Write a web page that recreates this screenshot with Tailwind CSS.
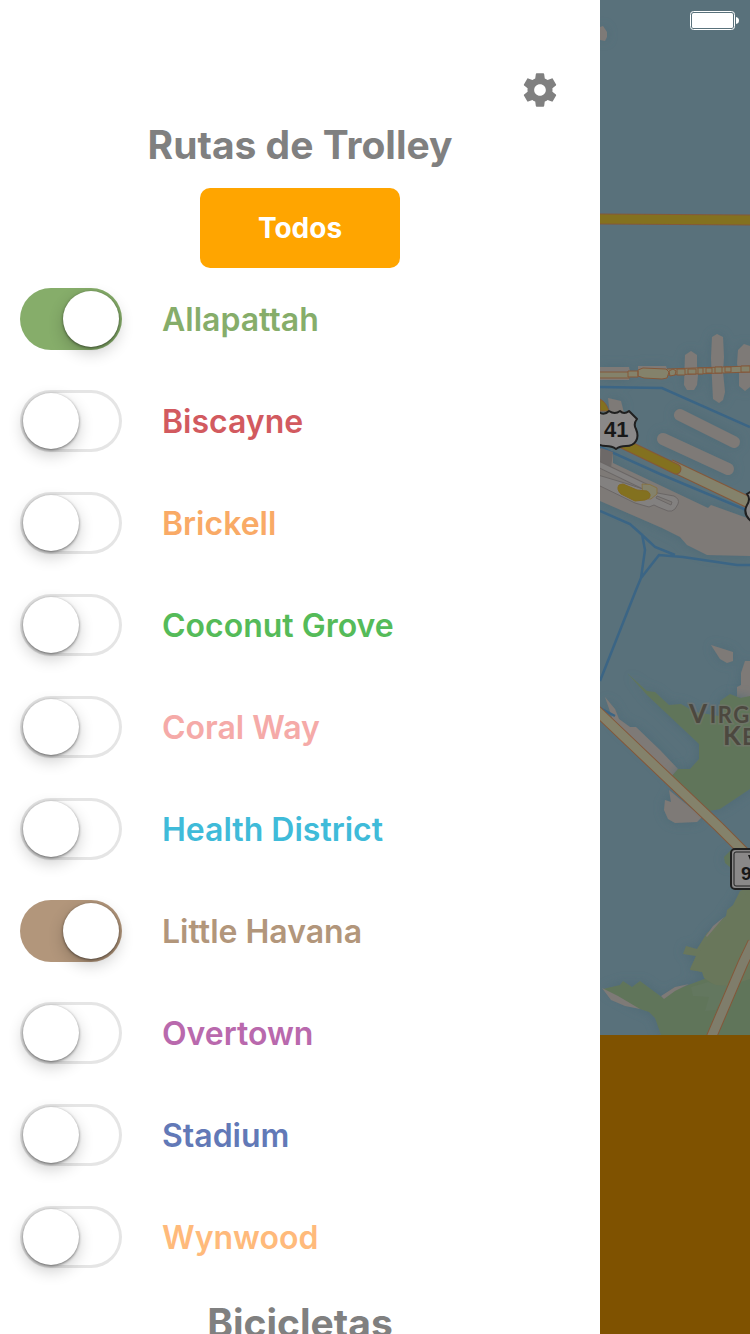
<!DOCTYPE html>
<html lang="es">
<head>
<meta charset="utf-8">
<meta name="viewport" content="width=device-width, initial-scale=1">
<title>Rutas de Trolley</title>
<script src="https://cdn.jsdelivr.net/npm/@tailwindcss/browser@4"></script>
</head>
<body class="bg-white font-['Inter','Liberation_Sans',sans-serif]">
<div class="flex h-screen overflow-hidden">
  <aside class="flex w-4/5 flex-col overflow-hidden bg-white pt-[70px]">
    <button type="button" aria-label="Ajustes" class="mr-10 h-10 w-10 shrink-0 self-end text-[#808080]">
      <svg viewBox="0 0 24 24" class="h-10 w-10" fill="currentColor" aria-hidden="true"><path d="M19.43 12.98c.04-.32.07-.64.07-.98s-.03-.66-.07-.98l2.11-1.65c.19-.15.24-.42.12-.64l-2-3.46c-.12-.22-.39-.3-.61-.22l-2.49 1c-.52-.4-1.08-.73-1.69-.98l-.38-2.65C14.46 2.18 14.25 2 14 2h-4c-.25 0-.46.18-.49.42l-.38 2.65c-.61.25-1.17.59-1.69.98l-2.49-1c-.23-.09-.49 0-.61.22l-2 3.46c-.13.22-.07.49.12.64l2.11 1.65c-.04.32-.07.65-.07.98s.03.66.07.98l-2.11 1.65c-.19.15-.24.42-.12.64l2 3.46c.12.22.39.3.61.22l2.49-1c.52.4 1.08.73 1.69.98l.38 2.65c.03.24.24.42.49.42h4c.25 0 .46-.18.49-.42l.38-2.65c.61-.25 1.17-.59 1.69-.98l2.49 1c.23.09.49 0 .61-.22l2-3.46c.12-.22.07-.49-.12-.64l-2.11-1.65zM12 15.5c-1.93 0-3.5-1.57-3.5-3.5s1.57-3.5 3.5-3.5 3.5 1.57 3.5 3.5-1.57 3.5-3.5 3.5z"/></svg>
    </button>
    <h1 class="mt-[10px] shrink-0 text-center text-[39px]/[50px] font-bold text-[#808080]">Rutas de Trolley</h1>
    <button type="button" class="mt-[18px] h-20 w-[200px] shrink-0 self-center rounded-[10px] bg-[#ffa500] text-[28px]/[40px] font-bold text-white">Todos</button>
    <ul id="routes" class="mt-5 flex shrink-0 flex-col gap-10 px-5"></ul>
    <h2 class="mt-[30px] shrink-0 text-center text-[39px]/[50px] font-bold text-[#808080]">Bicicletas</h2>
  </aside>

  <main class="relative flex w-1/5 flex-col overflow-hidden bg-[#59717b]">
    <svg viewBox="0 0 150 1035" preserveAspectRatio="xMinYMin slice" class="min-h-0 w-full flex-1" role="img" aria-label="Mapa de Miami">
      <defs>
        <filter id="shade" x="-30%" y="-30%" width="160%" height="160%"><feDropShadow dx="0" dy="0" stdDeviation="6" flood-color="#486873" flood-opacity=".75"/></filter>
      </defs>
      <rect width="150" height="1035" fill="#59717b"/>
      <!-- land -->
      <g fill="#7e7a77" filter="url(#shade)">
        <path d="M0 27 3 26 7 32 7 37 5 41 0 40z"/>
        <path d="M0 367h29l1 5-1 8H0zM38 366h28l2 6H38zM85 355l6-4 6 4v11l1 9-1 10-3 5h-7l-3-5zM112 337l5-3 6 3 1 20-1 15 2 20-2 8-4 3-6-4-1-20-1-21zM138 350l6-6 6 2v41l-5 4-6-5v-15l-2-7z"/>
        <path d="M8 398l13 3 3 12-14 2z"/>
        <path d="M80 415l54 27M63 439l65 30" stroke="#7e7a77" stroke-width="12" stroke-linecap="round"/>
        <path d="M0 447l13 4v12l95 45 3-3 39 14v37l-43-1-20-10-7-8-18-9L0 501z"/>
        <path d="M111 645l22 7v9l-6 2-7-4zM150 661h-5l-4 12v12l-4 2v10l5 1 5 9h3z"/>
        <path d="M5 697l10 12 4 10 11 8h6l24 23 18 19-7 8-57-54zM69 790l2 12-6-2-1 10 4 9 7 4 22-1 5-5z"/>
      </g>
      <!-- parks -->
      <g fill="#61755a" filter="url(#shade)">
        <path d="M27 673l20 18 8 1 14 13 12-1 14 8 24 4 1-15 10-7 10 4 10-2v93l-30 20-10 2-38-35 6-7h12l9-10v-15L47 695z"/>
        <path d="M131 850l-7 7 1 6 6 5z"/>
        <path fill="#69775b" d="M150 887l-10 4-7 14-6 5-1 6-19 17-10 16-11-3-3 8 13 2-6 14 13 2 2 6 47 15z"/>
        <path d="M3 989l17-4 3-4 9 6 8-6 23 17 12-8 32-12 43-10v67H61l-6-17-6-6-12-4z"/>
      </g>
      <path fill="#69775b" d="M150 889v90l-30 10-16-11-2-6-12-3 6-13z"/>
      <path fill="#63775f" d="M91 987l17-5 8 3 14 1-14 24-11 1 4-14-16-1z"/>
      <path fill="#7e7a77" d="M2 988l16 8 22 13-15-3-14-6zM61 996l14-9 14-3-14 7-11 8zM106 936l7-10 11-9-17 20z"/>
      <!-- ferry and shipping lanes -->
      <g fill="none" stroke="#3b6585" stroke-width="2.5">
        <path d="M0 387l62 1 88 39M0 447l60 27 86 36"/>
        <path d="M0 511l30 13 10 9 15 14 20 8M42 534l3 16-4 28-5 12L0 681M41 578l18-23 24 2 54 8h13M0 708l15 8"/>
      </g>
      <!-- port terminals -->
      <path fill="#6d6968" d="M1 448l12 4-2 16-11-5z"/>
      <path d="M-2 475l30 9 24 8 22 4q6 3 4 8l-3 5q-3 3-7 2l-10-4-4-2-5 2-14-4-37-18z" fill="#838180" stroke="#6b6766"/>
      <path d="M-2 464l54 26" stroke="#6b6766" stroke-width="7"/>
      <path d="M-2 464l54 26" stroke="#838180" stroke-width="5"/>
      <path d="M57 496l15 6-1 3-15-7z" fill="#7e7a77" stroke="#6b6766"/>
      <path d="M42 484q8-1 15 4v6l-6 5H43z" fill="#84826b" stroke="#876b35" stroke-width=".7"/>
      <path fill="#83711f" stroke="#846b20" d="M19 485l4-1 14 6 10 1q5 3 2 7l-4 2-10 1-14-7q-5-5-2-9z"/>
      <!-- roads -->
      <g fill="none">
        <path d="M-1 219l152 1" stroke="#84583a" stroke-width="11"/>
        <path d="M-1 219l152 1" stroke="#83711f" stroke-width="9"/>
        <path d="M0 375h30M67 372l83-3" stroke="#84583a" stroke-width="7"/>
        <path d="M0 375h30M67 372l83-3" stroke="#84826b" stroke-width="5"/>
        <path d="M28 371h10v6H28zM38 370l5-2 23 1 3 3-2 6-5 1-18-1-6-2zM69 371l4-2 3 2-1 4-5 1zM77 369h8v6h-8zM88 369h8v5h-8zM98 368h5v6h-5zM106 368h6v5h-6zM115 367h7v6h-7zM125 367h6v5h-6zM141 366h9v6h-9z" fill="#84826b" stroke="#84583a" stroke-width="1"/>
        <path d="M70 465l78 37" stroke="#84583a" stroke-width="12"/>
        <path d="M70 465l78 37" stroke="#84826b" stroke-width="10"/>
        <path d="M20 442l56 27" stroke="#84583a" stroke-width="11" stroke-linecap="round"/>
        <path d="M20 442l56 27" stroke="#83711f" stroke-width="9" stroke-linecap="round"/>
        <path d="M-5 709l124 118 35 35" stroke="#84583a" stroke-width="11"/>
        <path d="M-5 709l124 118 35 35" stroke="#84826b" stroke-width="9"/>
        <path d="M111 1038l32-75 10-21" stroke="#84583a" stroke-width="11"/>
        <path d="M111 1038l32-75 10-21" stroke="#7f7d6b" stroke-width="9"/>
      </g>
      <path d="M0 399q6 3 9 12H0z" fill="#83711f" stroke="#84583a"/>
      <!-- route shields -->
      <path d="M-1 412q5 4 10-1 6 4 11 0 4 4 9 0l8 8q-4 5-1 10 3 7 0 12-3 5-10 5-6 0-10 3-4-3-10-3-5 0-8-2z" fill="#8a8888" stroke="#202020" stroke-width="2" stroke-linejoin="round"/>
      <text x="4" y="437" font-family="Liberation Sans, sans-serif" font-size="22" font-weight="700" fill="#181818">41</text>
      <path d="M152 491l-5 3q4 5 0 11-5 9 5 17z" fill="#8a8888" stroke="#202020" stroke-width="2"/>
      <rect x="131" y="849" width="50" height="40" rx="4" fill="#8a8888" stroke="#202020" stroke-width="2"/>
      <rect x="134" y="852" width="44" height="34" rx="2" fill="#8a8888" stroke="#202020" stroke-width="1"/>
      <path d="M148 855h3l-1 5z" fill="#181818"/>
      <text x="141" y="880" font-family="Liberation Sans, sans-serif" font-size="19" font-weight="700" fill="#181818">9</text>
      <g font-family="Lato, sans-serif" font-weight="700" fill="#4c483f" stroke="#77766f" stroke-width="3" paint-order="stroke" stroke-opacity=".6">
        <text x="89" y="723" font-size="26">V<tspan font-size="22">&#8201;I&#8202;R&#8202;G</tspan></text>
        <text x="123" y="745" font-size="26">K<tspan font-size="22">&#8202;E</tspan></text>
      </g>
    </svg>
    <div class="h-[299px] shrink-0 bg-[#7f5200]"></div>
    <svg viewBox="0 0 50 20" class="absolute top-[11px] right-[10px] h-5 w-[50px]" role="img" aria-label="Batería llena">
      <rect x=".5" y=".5" width="44" height="18" rx="3" fill="none" stroke="#fff"/>
      <rect x="2" y="2" width="41" height="15" rx="1.5" fill="#fff"/>
      <path d="M46 6q3 .5 3 3.500t-3 3.500z" fill="#fff"/>
    </svg>
  </main>
</div>
<script>
  const routes = [
    ["Allapattah", "#86ad6a", true],
    ["Biscayne", "#d25a5f", false],
    ["Brickell", "#f9aa66", false],
    ["Coconut Grove", "#55bb59", false],
    ["Coral Way", "#f5aaa8", false],
    ["Health District", "#3fbbd9", false],
    ["Little Havana", "#b2967b", true],
    ["Overtown", "#b969ad", false],
    ["Stadium", "#6279b7", false],
    ["Wynwood", "#ffba7b", false]
  ];
  document.getElementById("routes").innerHTML = routes.map(([name, color, on], i) => `
    <li class="flex items-center gap-10" style="color:${color}">
      <input type="checkbox" role="switch" id="route-${i}" ${on ? "checked" : ""} class="h-[62px] w-[102px] shrink-0 appearance-none rounded-full bg-white p-[3px] inset-ring-[3px] inset-ring-[#e5e5e5] checked:bg-current checked:inset-ring-0 before:block before:h-14 before:w-14 before:rounded-full before:bg-white before:shadow-[0_1px_3px_rgba(0,0,0,0.5),0_6px_16px_rgba(0,0,0,0.2)] before:content-[''] checked:before:translate-x-10">
      <label for="route-${i}" class="pt-0.5 text-[32px]/[40px] font-semibold">${name}</label>
    </li>`).join("");
</script>
</body>
</html>
